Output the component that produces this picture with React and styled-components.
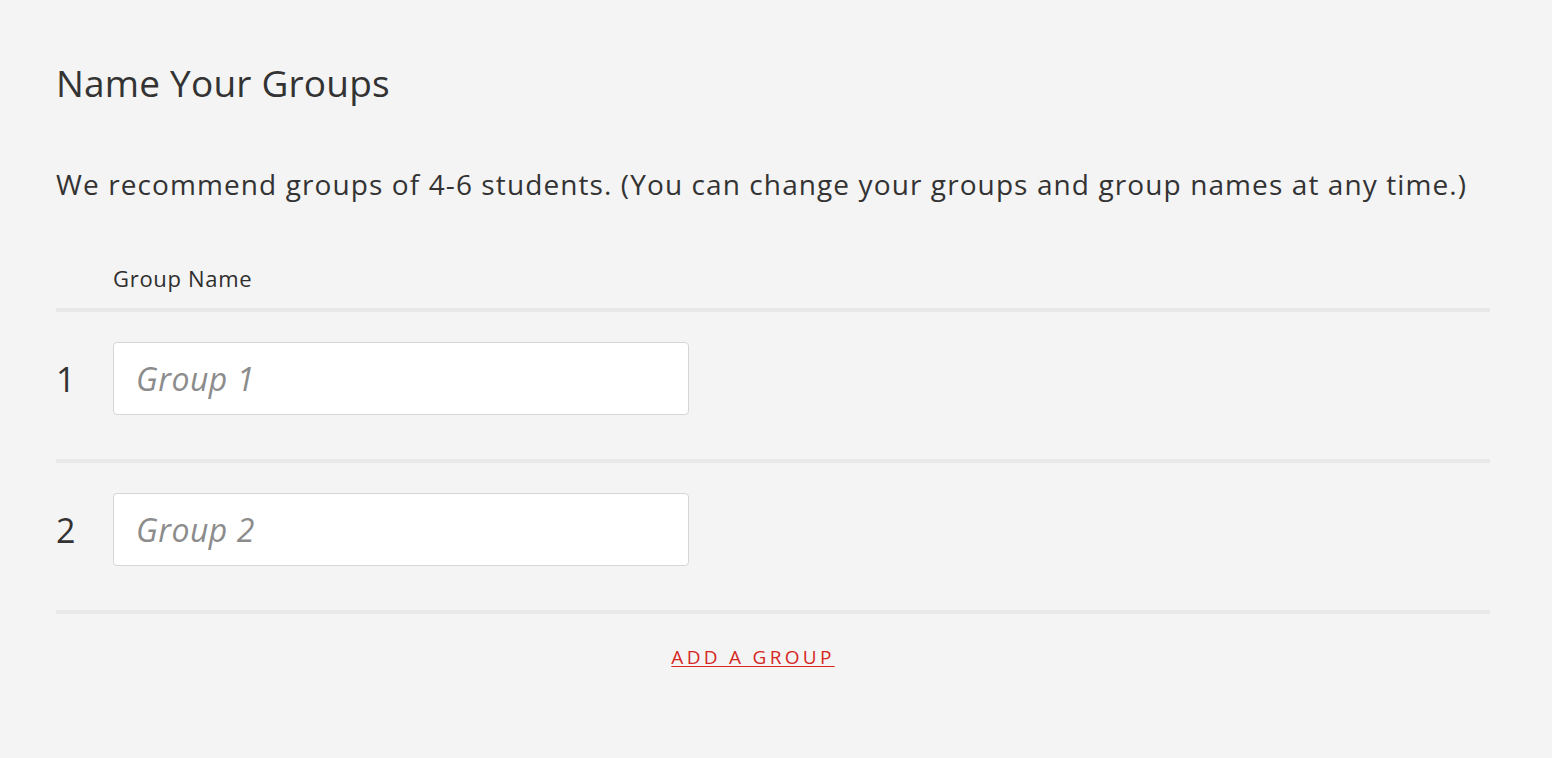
import React from 'react';
import styled, { createGlobalStyle } from 'styled-components';

const GlobalStyle = createGlobalStyle`
  html, body {
    margin: 0;
    padding: 0;
    background: #f4f4f4;
  }
  body {
    font-family: "Open Sans", Lato, sans-serif;
    color: #333333;
  }
`;

const Page = styled.div`
  min-height: 758px;
  padding: 56px 62px 0 56px;
  box-sizing: border-box;
`;

const Title = styled.h1`
  margin: 0;
  font-size: 37px;
  line-height: 54px;
  font-weight: 400;
  letter-spacing: 0.2px;
  color: #333333;
`;

const Intro = styled.p`
  margin: 54px 0 0;
  font-size: 28px;
  line-height: 40px;
  letter-spacing: 1.1px;
  color: #333333;
`;

const HeaderRow = styled.div`
  display: flex;
  align-items: center;
  margin-top: 58px;
  padding: 0 0 14px 57px;
  border-bottom: 4px solid #e8e8e8;
`;

const ColumnLabel = styled.span`
  font-size: 22px;
  line-height: 32px;
  font-weight: 500;
  letter-spacing: 0.7px;
  color: #2e2e2e;
`;

const GroupRow = styled.div`
  display: flex;
  align-items: center;
  padding: 30px 0 44px;
  border-bottom: 4px solid #e8e8e8;
`;

const RowNumber = styled.span`
  width: 57px;
  font-size: 34px;
  color: #333333;
`;

const NameInput = styled.input`
  box-sizing: border-box;
  width: 576px;
  height: 73px;
  padding: 0 22px;
  background: #ffffff;
  border: 1px solid #d6d6d6;
  border-radius: 4px;
  font-family: "Open Sans", Lato, sans-serif;
  font-size: 32px;
  letter-spacing: 0.5px;
  color: #333333;
  outline: none;

  &::placeholder {
    color: #8c8c8c;
    font-style: italic;
  }
`;

const Footer = styled.div`
  display: flex;
  justify-content: center;
  padding: 30px 40px 0 0;
`;

const AddLink = styled.a`
  font-size: 19px;
  letter-spacing: 3.3px;
  color: #d6281f;
  text-decoration: underline;
  text-underline-offset: 2px;
  cursor: pointer;
`;

const groups = [1, 2];

const App = () => {
  return (
    <Page>
      <GlobalStyle />
      <Title>Name Your Groups</Title>
      <Intro>
        We recommend groups of 4-6 students. (You can change your groups and
        group names at any time.)
      </Intro>
      <HeaderRow>
        <ColumnLabel>Group Name</ColumnLabel>
      </HeaderRow>
      {groups.map((n) => (
        <GroupRow key={n}>
          <RowNumber>{n}</RowNumber>
          <NameInput placeholder={`Group ${n}`} />
        </GroupRow>
      ))}
      <Footer>
        <AddLink>ADD A GROUP</AddLink>
      </Footer>
    </Page>
  );
};

export default App;
